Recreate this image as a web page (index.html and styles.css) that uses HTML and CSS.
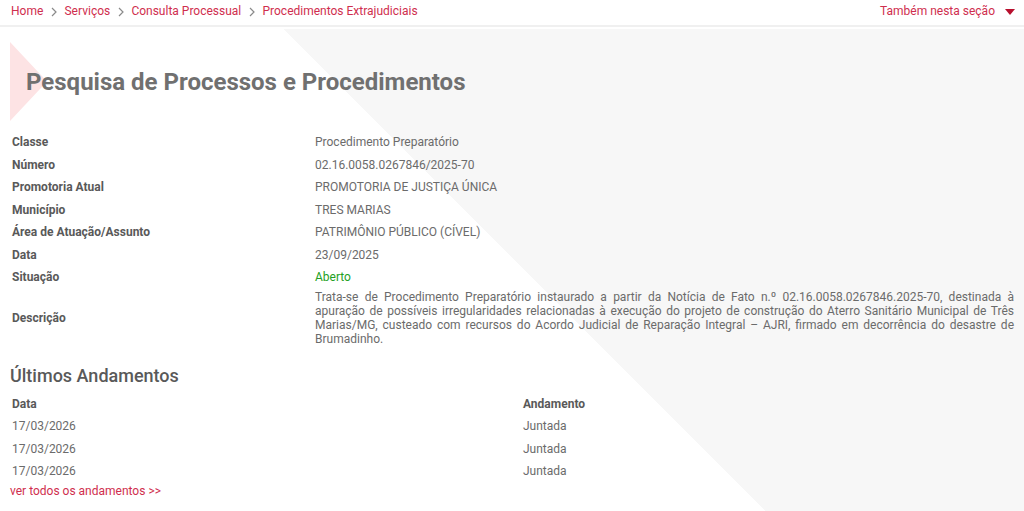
FILE: index.html
```html
<!DOCTYPE html>
<html lang="pt-BR">
<head>
<meta charset="utf-8">
<title>Pesquisa de Processos e Procedimentos</title>
<link rel="stylesheet" href="styles.css">
</head>
<body>
<header class="topbar">
  <nav class="crumbs">
    <a href="#">Home</a>
    <svg class="chev" viewBox="0 0 6 10" width="6" height="10"><path d="M1 1l4 4-4 4" fill="none" stroke="#8a8a8a" stroke-width="1.2"/></svg>
    <a href="#">Serviços</a>
    <svg class="chev" viewBox="0 0 6 10" width="6" height="10"><path d="M1 1l4 4-4 4" fill="none" stroke="#8a8a8a" stroke-width="1.2"/></svg>
    <a href="#">Consulta Processual</a>
    <svg class="chev" viewBox="0 0 6 10" width="6" height="10"><path d="M1 1l4 4-4 4" fill="none" stroke="#8a8a8a" stroke-width="1.2"/></svg>
    <a href="#">Procedimentos Extrajudiciais</a>
  </nav>
  <a class="section-menu" href="#">Também nesta seção
    <svg class="caret" viewBox="0 0 10 6" width="10" height="6"><path d="M0 0h10L5 6z" fill="#b8102e"/></svg>
  </a>
</header>
<main class="main">
  <div class="title-block">
    <h1 class="title">Pesquisa de Processos e Procedimentos</h1>
  </div>
  <dl class="info">
    <div class="row"><dt>Classe</dt><dd>Procedimento Preparatório</dd></div>
    <div class="row"><dt>Número</dt><dd>02.16.0058.0267846/2025-70</dd></div>
    <div class="row"><dt>Promotoria Atual</dt><dd>PROMOTORIA DE JUSTIÇA ÚNICA</dd></div>
    <div class="row"><dt>Município</dt><dd>TRES MARIAS</dd></div>
    <div class="row"><dt>Área de Atuação/Assunto</dt><dd>PATRIMÔNIO PÚBLICO (CÍVEL)</dd></div>
    <div class="row"><dt>Data</dt><dd>23/09/2025</dd></div>
    <div class="row"><dt>Situação</dt><dd class="ok">Aberto</dd></div>
    <div class="row desc"><dt>Descrição</dt><dd>Trata-se de Procedimento Preparatório instaurado a partir da Notícia de Fato n.º 02.16.0058.0267846.2025-70, destinada à apuração de possíveis irregularidades relacionadas à execução do projeto de construção do Aterro Sanitário Municipal de Três Marias/MG, custeado com recursos do Acordo Judicial de Reparação Integral – AJRI, firmado em decorrência do desastre de Brumadinho.</dd></div>
  </dl>
  <h2 class="subtitle">Últimos Andamentos</h2>
  <div class="moves">
    <div class="mrow head"><span>Data</span><span>Andamento</span></div>
    <div class="mrow"><span>17/03/2026</span><span>Juntada</span></div>
    <div class="mrow"><span>17/03/2026</span><span>Juntada</span></div>
    <div class="mrow"><span>17/03/2026</span><span>Juntada</span></div>
  </div>
  <a class="all" href="#">ver todos os andamentos &gt;&gt;</a>
</main>
</body>
</html>
```
FILE: styles.css
```css
* { box-sizing: border-box; }
html, body { margin: 0; padding: 0; background: #fff; }
body {
  font-family: Roboto, "Liberation Sans", Arial, sans-serif;
  font-size: 12px;
  color: #6b6b6b;
  height: 511px;
  overflow: hidden;
}
a { text-decoration: none; }

.topbar {
  height: 27px;
  border-bottom: 2px solid #f0f0f0;
  display: flex;
  justify-content: space-between;
  align-items: flex-start;
  padding: 3px 9px 0 11px;
}
.crumbs { display: flex; align-items: center; gap: 7.6px; height: 17px; }
.crumbs a { color: #cf2e4e; font-size: 12px; line-height: 17px; }
.chev { display: block; }
.section-menu {
  color: #cf2e4e;
  font-size: 12px;
  line-height: 17px;
  display: flex;
  align-items: center;
  gap: 10px;
}
.caret { display: block; }

.main {
  margin-top: 2px;
  padding: 13px 10px 0 10px;
  height: 482px;
  background: #fff linear-gradient(45deg, transparent 50%, #f7f7f7 50%) 283px 0 / 2000px 2000px no-repeat;
}

.title-block {
  position: relative;
  height: 79px;
  display: flex;
  align-items: center;
  padding-left: 16px;
}
.title-block::before {
  content: "";
  position: absolute;
  left: 0;
  top: 0;
  width: 37px;
  height: 79px;
  background: #fde3e4;
  clip-path: polygon(0 0, 100% 50%, 0 100%);
}
.title {
  position: relative;
  margin: 0;
  font-size: 24px;
  font-weight: 700;
  color: #707070;
  line-height: 28px;
}

.info { margin: 10px 0 0 0; }
.row {
  display: grid;
  grid-template-columns: 303px 1fr;
  align-items: center;
  min-height: 22.5px;
  padding-left: 2px;
}
.row dt { font-weight: 700; color: #595959; line-height: 14px; }
.row dd { margin: 0; color: #6b6b6b; line-height: 14px; }
.row dd.ok { color: #23a023; }
.row.desc { padding-top: 1px; }
.row.desc dd { text-align: justify; line-height: 14px; }

.subtitle {
  margin: 19px 0 0 0;
  font-size: 18px;
  font-weight: 500;
  color: #595959;
  line-height: 22px;
}
.moves { margin-top: 6px; }
.mrow {
  display: grid;
  grid-template-columns: 511px 1fr;
  height: 22.5px;
  align-items: center;
  padding-left: 2px;
}
.mrow span { line-height: 14px; color: #6b6b6b; }
.mrow.head span { font-weight: 700; color: #595959; }
.all {
  display: block;
  color: #cf2e4e;
  line-height: 14px;
  margin-top: 1px;
}
```
